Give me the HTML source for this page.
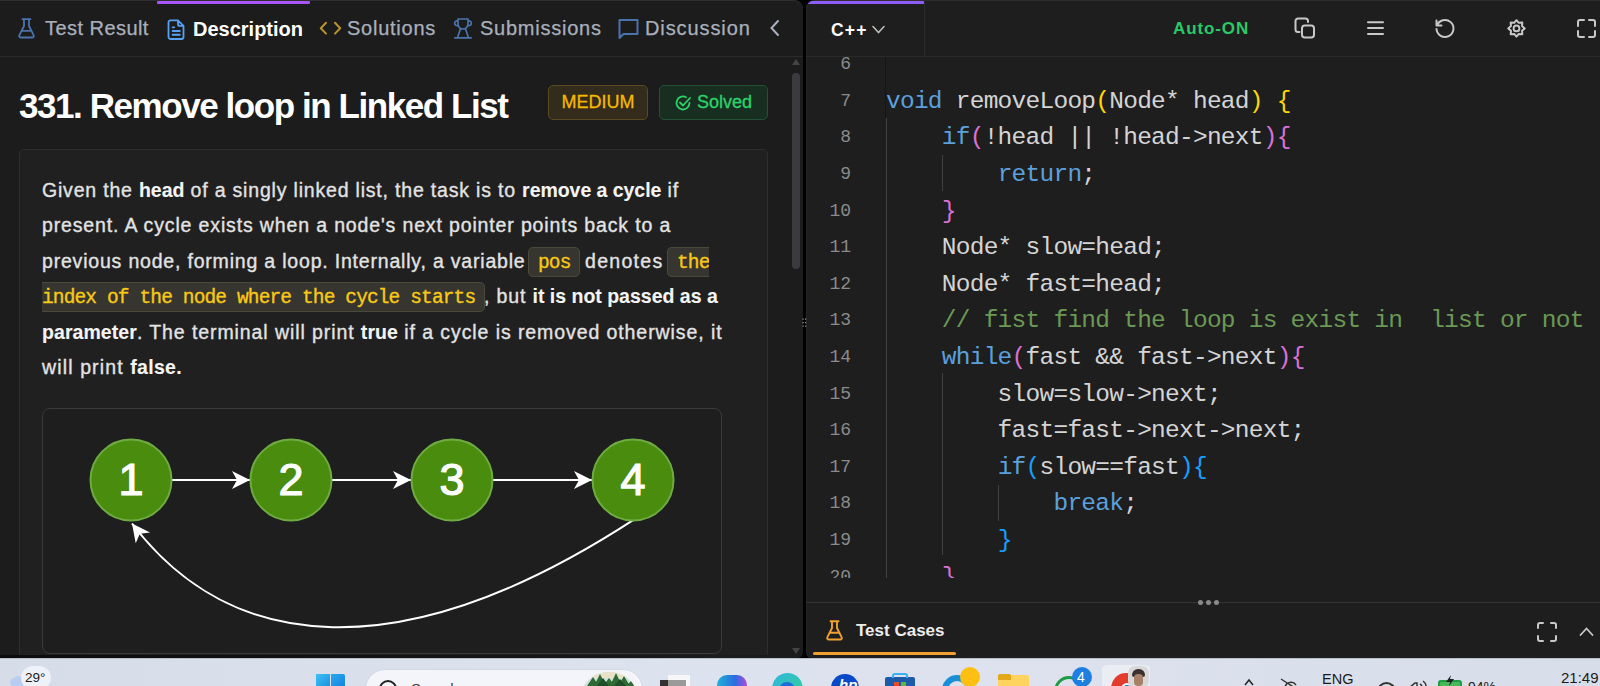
<!DOCTYPE html>
<html><head><meta charset="utf-8">
<style>
*{margin:0;padding:0;box-sizing:border-box}
html,body{width:1600px;height:686px;overflow:hidden;background:#000;font-family:"Liberation Sans",sans-serif}
.abs{position:absolute}
#left{position:absolute;left:0;top:0;width:803px;height:658px;background:#1c1c1c;border-radius:0 9px 6px 0;overflow:hidden;box-shadow:inset 0 1px 0 #2e2e2e}
#right{position:absolute;left:806px;top:0;width:794px;height:658px;background:#1e1e1e;border-radius:9px 0 0 6px;overflow:hidden;box-shadow:inset 0 1px 0 #2e2e2e,inset 1px 0 0 #262626}
.tab{position:absolute;top:16px;font-size:20px;color:#a9b0bc;white-space:nowrap;line-height:24px;-webkit-text-stroke:0.25px #a9b0bc}
.hdrline{position:absolute;left:0;top:56px;height:1px;background:#2a2a2a}
#taskbar{position:absolute;left:0;top:658px;width:1600px;height:28px;background:linear-gradient(90deg,#d6dce8,#dde2ef 40%,#dde2ee 60%,#d8dee9);overflow:hidden}
.mono{font-family:"Liberation Mono",monospace}
.desc{position:absolute;left:42px;font-size:19.5px;color:#e3e3e3;white-space:nowrap;line-height:24px}
.desc{letter-spacing:var(--ls);-webkit-text-stroke:0.35px #e3e3e3}
.desc b{color:#f4f4f4;-webkit-text-stroke:0.1px #f4f4f4;letter-spacing:calc(var(--ls) - 0.85px)}
.ic{position:absolute;background:#363530;border:1px solid #4b4939;border-radius:5px}
.code{position:absolute;margin-top:1px;left:80px;font-family:"Liberation Mono",monospace;font-size:24.5px;letter-spacing:-0.75px;color:#d4d4d4;white-space:pre;line-height:36.6px}
.ln{position:absolute;width:45px;left:0;text-align:right;font-family:"Liberation Mono",monospace;font-size:18px;color:#8b8b8b;line-height:36.6px}
.kw{color:#5ba0dc}.p1{color:#ffd700}.p2{color:#da70d6}.p3{color:#179fff}.cm{color:#6a9955}
.icode{position:absolute;-webkit-text-stroke:0.35px #f8c916;font-family:"Liberation Mono",monospace;font-size:19.5px;letter-spacing:-0.87px;margin-top:2px;color:#f8c916;white-space:pre;line-height:24px}
.guide{position:absolute;width:1px;background:#404040}
</style></head><body>
<div id="left">
  <div class="abs" style="left:157px;top:1px;width:153px;height:3px;background:#a855f7;border-radius:1px"></div>
  <!-- flask icon -->
  <svg class="abs" style="left:17.5px;top:17.5px" width="18" height="21" viewBox="0 0 18 21"><path d="M4.5 1.2h8M6 1.2v6.8L1.4 17.1c-.6 1.1.1 2.4 1.4 2.4h11.4c1.3 0 2-1.3 1.4-2.4L11 8V1.2M3.5 12.8h10" fill="none" stroke="#4a73ab" stroke-width="1.8" stroke-linejoin="round" stroke-linecap="round"/></svg>
  <div class="tab" id="t1" style="left:45px;letter-spacing:0.45px">Test Result</div>
  <svg class="abs" style="left:167px;top:19px" width="18" height="22" viewBox="0 0 18 22"><path d="M3.5 1.4h7.5l5.5 5.5v11.1a2 2 0 0 1-2 2H3.5a2 2 0 0 1-2-2V3.4a2 2 0 0 1 2-2zM11 1.4v3.5a2 2 0 0 0 2 2h3.5" fill="none" stroke="#56a0f5" stroke-width="1.8" stroke-linejoin="round"/><path d="M5.6 8.3h1.6M5.6 12h7.2M5.6 15.75h7.2" stroke="#56a0f5" stroke-width="1.8" stroke-linecap="round"/></svg>
  <div class="tab" style="left:193px;color:#fff;font-weight:bold;top:17px;-webkit-text-stroke:0">Description</div>
  <svg class="abs" style="left:319px;top:21px" width="23" height="15" viewBox="0 0 23 15"><path d="M7 1.8L1.8 7.2 7 12.6M16 1.8l5.2 5.4L16 12.6" fill="none" stroke="#b8942a" stroke-width="2" stroke-linecap="round" stroke-linejoin="round"/></svg>
  <div class="tab" id="t3" style="left:347px;letter-spacing:0.75px">Solutions</div>
  <svg class="abs" style="left:452px;top:17px" width="22" height="22" viewBox="0 0 22 22"><path d="M6 2h10v5a5 5 0 0 1-10 0zM6 4C1.6 3 1.6 9.5 6 8.5M16 4c4.4-1 4.4 5.5 0 4.5M8.5 11.8L5.5 20.8M13.5 11.8l3 9M2.8 20.8h16.4" fill="none" stroke="#4a73ab" stroke-width="1.7" stroke-linejoin="round" stroke-linecap="round"/></svg>
  <div class="tab" id="t4" style="left:480px;letter-spacing:0.75px">Submissions</div>
  <svg class="abs" style="left:617px;top:18px" width="23" height="22" viewBox="0 0 23 22"><path d="M2.5 2h18v14h-14l-4 4z" fill="none" stroke="#4a73ab" stroke-width="2" stroke-linejoin="round"/></svg>
  <div class="tab" id="t5" style="left:645px;letter-spacing:0.9px">Discussion</div>
  <svg class="abs" style="left:769px;top:19px" width="12" height="18" viewBox="0 0 12 18"><path d="M9 2L2.5 9 9 16" fill="none" stroke="#a9b0bc" stroke-width="2" stroke-linecap="round"/></svg>
  <div class="hdrline" style="width:803px"></div>

  <!-- title -->
  <div class="abs" style="left:19px;top:86px;font-size:35px;font-weight:bold;color:#fff;white-space:nowrap;line-height:40px;letter-spacing:-1.43px">331. Remove loop in Linked List</div>
  <div class="abs" style="left:548px;top:85px;width:100px;height:35px;background:#332b1b;border:1px solid #5a4a1e;border-radius:5px;color:#f5b800;font-size:18px;line-height:33px;text-align:center;-webkit-text-stroke:0.3px #f5b800">MEDIUM</div>
  <div class="abs" style="left:659px;top:85px;width:109px;height:35px;background:#182e20;border:1px solid #225236;border-radius:5px;color:#2bd46a;font-size:18px;line-height:33px;-webkit-text-stroke:0.3px #2bd46a">
    <svg class="abs" style="left:14px;top:8px" width="18" height="18" viewBox="0 0 18 18"><path d="M15.5 9A6.5 6.5 0 1 1 12 3.2M6 8.5l3 3 7-7.5" fill="none" stroke="#2bd46a" stroke-width="1.8" stroke-linecap="round" stroke-linejoin="round"/></svg>
    <span class="abs" style="left:37px;top:0">Solved</span>
  </div>

  <!-- scrollbar -->
  <div class="abs" style="left:792px;top:73px;width:8px;height:196px;background:#3b3b3f;border-radius:4px"></div>
  <div class="abs" style="left:792px;top:59px;width:0;height:0;border-left:4px solid transparent;border-right:4px solid transparent;border-bottom:6px solid #444"></div>
  <div class="abs" style="left:792px;top:648px;width:0;height:0;border-left:4px solid transparent;border-right:4px solid transparent;border-top:6px solid #444"></div>

  <!-- description box -->
  <div class="abs" style="left:19px;top:149px;width:749px;height:560px;background:#202020;border:1px solid #2e2e2e;border-radius:5px"></div>

  <div class="desc" id="d1" style="--ls:0.809px;top:178px">Given the <b>head</b> of a singly linked list, the task is to <b>remove a cycle</b> if</div>
  <div class="desc" id="d2" style="--ls:0.858px;top:213px">present. A cycle exists when a node's next pointer points back to a</div>
  <div class="desc" id="d3a" style="--ls:0.806px;top:249px">previous node, forming a loop. Internally, a variable</div>
  <div class="ic" style="left:528px;top:247px;width:52px;height:30px"></div>
  <div class="icode" style="left:538px;top:249px">pos</div>
  <div class="desc" id="d3b" style="--ls:1.3px;left:585px;top:249px">denotes</div>
  <div class="ic" style="left:667px;top:247px;width:50px;height:30px;border-right:0;border-radius:5px 0 0 5px"></div>
  <div class="icode" style="left:677px;top:249px">the</div>
  <div class="abs" style="left:709px;top:240px;width:40px;height:40px;background:#202020"></div>
  <div class="ic" style="left:42px;top:282px;width:443px;height:30px;border-left:0;border-radius:0 5px 5px 0"></div>
  <div class="icode" style="left:42px;top:284px">index of the node where the cycle starts</div>
  <div class="desc" id="d4" style="--ls:0.85px;left:484px;top:284px">, but <b>it is not passed as a</b></div>
  <div class="desc" id="d5" style="--ls:0.916px;top:320px"><b>parameter</b>. The terminal will print <b>true</b> if a cycle is removed otherwise, it</div>
  <div class="desc" id="d6" style="--ls:1.130px;top:355px">will print <b>false.</b></div>

  <div class="abs" style="left:0;top:655px;width:803px;height:3px;background:linear-gradient(90deg,#0c0c0c,#111 300px,#161616 600px,#1c1c1c 720px)"></div>
  <!-- image box -->
  <div class="abs" style="left:42px;top:408px;width:680px;height:246px;background:#1e1e1e;border:1px solid #3a3a3a;border-radius:8px"></div>
  <svg class="abs" style="left:0;top:0" width="803" height="658">
    <defs>
      <marker id="ah" markerWidth="20" markerHeight="20" refX="18" refY="9" orient="auto" markerUnits="userSpaceOnUse">
        <path d="M0 0L18 9L0 18L5 9z" fill="#fff"/>
      </marker>
    </defs>
    <g stroke="#fff" stroke-width="2" fill="none">
      <line x1="172" y1="480" x2="250" y2="480" marker-end="url(#ah)"/>
      <line x1="332" y1="480" x2="411" y2="480" marker-end="url(#ah)"/>
      <line x1="493" y1="480" x2="592" y2="480" marker-end="url(#ah)"/>
      <path d="M633.5 519.9C401.3 670.9 230.8 653.8 132 523.5" marker-end="url(#ah)"/>
    </g>
    <g fill="#4a8c0e" stroke="#6eab42" stroke-width="2">
      <circle cx="131" cy="480" r="40.5"/>
      <circle cx="291" cy="480" r="40.5"/>
      <circle cx="452" cy="480" r="40.5"/>
      <circle cx="633" cy="480" r="40.5"/>
    </g>
    <g fill="#fff" stroke="#fff" stroke-width="1.2" style="font-family:'Liberation Sans',sans-serif;font-size:45px" text-anchor="middle">
      <text x="131" y="495">1</text><text x="291" y="495">2</text><text x="452" y="495">3</text><text x="633" y="495">4</text>
    </g>
  </svg>
</div>

<div id="right">
  <div class="abs" style="left:2px;top:1px;width:116px;height:3px;background:#8b5cf6;border-radius:2px 1px 0 0"></div>
  <div class="abs" style="left:118px;top:0;width:1px;height:56px;background:#2a2a2a"></div>
  <div class="abs" style="left:25px;top:18px;font-size:17.5px;font-weight:bold;color:#fff;line-height:24px;letter-spacing:1.2px">C++</div>
  <svg class="abs" style="left:66px;top:25px" width="13" height="9" viewBox="0 0 13 9"><path d="M1 1.5l5.5 6 5.5-6" fill="none" stroke="#bbb" stroke-width="1.6" stroke-linecap="round"/></svg>
  <div class="abs" style="left:367px;top:17px;font-size:17px;font-weight:bold;color:#2ac866;line-height:24px;letter-spacing:0.9px">Auto-ON</div>
  <svg class="abs" style="left:488px;top:17px" width="23" height="23" viewBox="0 0 23 23"><path d="M5.5 15H4a2.5 2.5 0 0 1-2.5-2.5V4A2.5 2.5 0 0 1 4 1.5h7.5A2.5 2.5 0 0 1 14 4v1" fill="none" stroke="#c8c8c8" stroke-width="2" stroke-linecap="round"/><rect x="8" y="8.6" width="12" height="12" rx="2.8" fill="none" stroke="#c8c8c8" stroke-width="2"/></svg>
  <svg class="abs" style="left:560px;top:19px" width="20" height="19" viewBox="0 0 20 19"><path d="M2 3.2h15M2 9.1h15M2 15h15" fill="none" stroke="#c8c8c8" stroke-width="2" stroke-linecap="round"/></svg>
  <svg class="abs" style="left:627px;top:16px" width="25" height="25" viewBox="0 0 25 25"><path d="M4 9.5A8.5 8.5 0 1 1 3.5 13M3.5 4.5v5h5" fill="none" stroke="#c8c8c8" stroke-width="2" stroke-linecap="round" stroke-linejoin="round"/></svg>
  <svg class="abs" style="left:701px;top:19px" width="19" height="19" viewBox="0 0 19 19"><path d="M9.50 1.20 L11.80 3.86 L15.30 3.60 L15.04 7.10 L17.70 9.40 L15.04 11.70 L15.30 15.20 L11.80 14.94 L9.50 17.60 L7.20 14.94 L3.70 15.20 L3.96 11.70 L1.30 9.40 L3.96 7.10 L3.70 3.60 L7.20 3.86Z" fill="none" stroke="#c8c8c8" stroke-width="2" stroke-linejoin="round"/><circle cx="9.5" cy="9.4" r="2.9" fill="none" stroke="#c8c8c8" stroke-width="1.9"/></svg>
  <svg class="abs" style="left:771px;top:18.5px" width="20" height="20" viewBox="0 0 20 20"><path d="M1 7V3a2 2 0 0 1 2-2h4M12 1h4a2 2 0 0 1 2 2v4M18 12v4a2 2 0 0 1-2 2h-4M7 18H3a2 2 0 0 1-2-2v-4" fill="none" stroke="#c8c8c8" stroke-width="2" stroke-linecap="round"/></svg>
  <div class="abs" style="left:0;top:56px;width:794px;height:1px;background:#2a2a2a"></div>

  <div class="abs" style="left:0;top:57px;width:794px;height:521px;overflow:hidden">
    <div class="abs" style="left:79px;top:0;width:1px;height:61px;background:#141414"></div>
    <div class="guide" style="left:80px;top:61px;height:460px"></div>
    <div class="guide" style="left:136px;top:98px;height:36px"></div>
    <div class="guide" style="left:136px;top:316px;height:182px"></div>
    <div class="guide" style="left:192px;top:428px;height:36px"></div>
    <div id="lns" class="abs" style="left:0;top:0">
      <div class="ln" style="top:-10.8px">6</div>
      <div class="ln" style="top:25.8px">7</div>
      <div class="ln" style="top:62.4px">8</div>
      <div class="ln" style="top:99px">9</div>
      <div class="ln" style="top:135.6px">10</div>
      <div class="ln" style="top:172.2px">11</div>
      <div class="ln" style="top:208.8px">12</div>
      <div class="ln" style="top:245.4px">13</div>
      <div class="ln" style="top:282px">14</div>
      <div class="ln" style="top:318.6px">15</div>
      <div class="ln" style="top:355.2px">16</div>
      <div class="ln" style="top:391.8px">17</div>
      <div class="ln" style="top:428.4px">18</div>
      <div class="ln" style="top:465px">19</div>
      <div class="ln" style="top:501.6px">20</div>
    </div>
    <div class="code" id="c7" style="top:25.8px"><span class="kw">void</span> removeLoop<span class="p1">(</span>Node* head<span class="p1">)</span> <span class="p1">{</span></div>
    <div class="code" style="top:62.4px">    <span class="kw">if</span><span class="p2">(</span>!head || !head-&gt;next<span class="p2">){</span></div>
    <div class="code" style="top:99px">        <span class="kw">return</span>;</div>
    <div class="code" style="top:135.6px">    <span class="p2">}</span></div>
    <div class="code" style="top:172.2px">    Node* slow=head;</div>
    <div class="code" style="top:208.8px">    Node* fast=head;</div>
    <div class="code cm" id="c13" style="top:245.4px">    // fist find the loop is exist in  list or not</div>
    <div class="code" style="top:282px">    <span class="kw">while</span><span class="p2">(</span>fast &amp;&amp; fast-&gt;next<span class="p2">){</span></div>
    <div class="code" style="top:318.6px">        slow=slow-&gt;next;</div>
    <div class="code" style="top:355.2px">        fast=fast-&gt;next-&gt;next;</div>
    <div class="code" style="top:391.8px">        <span class="kw">if</span><span class="p3">(</span>slow==fast<span class="p3">){</span></div>
    <div class="code" style="top:428.4px">            <span class="kw">break</span>;</div>
    <div class="code" style="top:465px">        <span class="p3">}</span></div>
    <div class="code" style="top:501.6px">    <span class="p2">}</span></div>
  </div>

  <div class="abs" style="left:0;top:602px;width:794px;height:1px;background:#333"></div>
  <div class="abs" style="left:392px;top:600px;width:5px;height:5px;border-radius:50%;background:#8a8a8a"></div>
  <div class="abs" style="left:400px;top:600px;width:5px;height:5px;border-radius:50%;background:#8a8a8a"></div>
  <div class="abs" style="left:408px;top:600px;width:5px;height:5px;border-radius:50%;background:#8a8a8a"></div>
  <svg class="abs" style="left:19.5px;top:619.5px" width="18" height="21" viewBox="0 0 18 21"><path d="M4.5 1.2h8M6 1.2v6.8L1.4 17.1c-.6 1.1.1 2.4 1.4 2.4h11.4c1.3 0 2-1.3 1.4-2.4L11 8V1.2M3.5 12.8h10" fill="none" stroke="#f0a030" stroke-width="1.9" stroke-linejoin="round" stroke-linecap="round"/></svg>
  <div class="abs" style="left:50px;top:619px;font-size:17px;font-weight:bold;color:#ececec;line-height:24px">Test Cases</div>
  <div class="abs" style="left:7px;top:652px;width:143px;height:3px;background:#f0a030;border-radius:2px"></div>
  <svg class="abs" style="left:731px;top:622px" width="20" height="20" viewBox="0 0 20 20"><path d="M1 6V3a2 2 0 0 1 2-2h3M14 1h3a2 2 0 0 1 2 2v3M19 14v3a2 2 0 0 1-2 2h-3M6 19H3a2 2 0 0 1-2-2v-3" fill="none" stroke="#c8c8c8" stroke-width="2" stroke-linecap="round"/></svg>
  <svg class="abs" style="left:773px;top:626px" width="15" height="11" viewBox="0 0 15 11"><path d="M1.5 9l6-6.5 6 6.5" fill="none" stroke="#c8c8c8" stroke-width="1.8" stroke-linecap="round"/></svg>
</div>

<svg class="abs" style="left:802px;top:318px" width="5" height="10" viewBox="0 0 5 10"><g fill="#9a9a9a"><rect x="0.5" y="0.5" width="1.2" height="1.2"/><rect x="3" y="0.5" width="1.2" height="1.2"/><rect x="0.5" y="4" width="1.2" height="1.2"/><rect x="3" y="4" width="1.2" height="1.2"/><rect x="0.5" y="7.5" width="1.2" height="1.2"/><rect x="3" y="7.5" width="1.2" height="1.2"/></g></svg>
<div id="taskbar">
  <div class="abs" style="left:0;top:0;width:1600px;height:1px;background:#b9bec9"></div>
  <svg class="abs" style="left:9px;top:671px;top:13px" width="16" height="15" viewBox="0 0 16 15"><path d="M4 15a4 4 0 0 1 1-7.8A5 5 0 0 1 14 9v6z" fill="#b9cdf0"/></svg>
  <div class="abs" style="left:21px;top:8px;width:30px;height:24px;border-radius:12px;background:#eef1f7"></div>
  <div class="abs" style="left:25px;top:12px;font-size:13.5px;color:#1b1b1b;line-height:16px">29°</div>
  <div class="abs" style="left:316px;top:16px;width:14px;height:14px;background:linear-gradient(135deg,#3fc1f5,#1b8fe0)"></div>
  <div class="abs" style="left:331px;top:16px;width:14px;height:14px;background:linear-gradient(135deg,#2aa8f0,#1482dd);border-top-right-radius:2px"></div>
  <div class="abs" style="left:365px;top:11px;width:278px;height:40px;border-radius:20px;background:#f3f5fa;border:1px solid #d3d8e3"></div>
  <div class="abs" style="left:379px;top:22px;width:18px;height:18px;border-radius:50%;border:2.5px solid #222"></div>
  <div class="abs" style="left:411px;top:21px;font-size:15px;color:#444;line-height:20px">Search</div>
  <svg class="abs" style="left:581px;top:14px" width="56" height="14" viewBox="0 0 56 14"><defs><clipPath id="tc"><ellipse cx="28" cy="22" rx="27" ry="22"/></clipPath></defs><g clip-path="url(#tc)"><rect width="56" height="14" fill="#cfe2dc"/><rect y="0" width="56" height="6" fill="#e8e2c8"/><path d="M6 14L12 5 18 14zM13 14L19 2 25 14zM22 14L28 6 34 14zM29 14L35 1 41 14zM37 14L43 4 49 14zM45 14L51 8 57 14z" fill="#2e6b35"/><path d="M16 14L22 6 28 14zM33 14L39 7 45 14z" fill="#1f4f28"/></g></svg>
  <div class="abs" style="left:668px;top:17px;width:22px;height:14px;background:#f7f7f7"></div>
  <div class="abs" style="left:660px;top:22px;width:8px;height:8px;background:#333"></div>
  <div class="abs" style="left:668px;top:22px;width:18px;height:8px;background:#9a9a9a"></div>
  <div class="abs" style="left:717px;top:17px;width:30px;height:22px;border-radius:10px 10px 0 0;background:linear-gradient(90deg,#22b0d8,#2a6de0 60%,#b14ad8)"></div>
  <div class="abs" style="left:772px;top:15px;width:31px;height:31px;border-radius:50%;background:linear-gradient(135deg,#2fb5e0,#34d48a)"></div>
  <div class="abs" style="left:779px;top:24px;width:16px;height:16px;border-radius:50%;background:#1d6ed8"></div>
  <div class="abs" style="left:831px;top:16px;width:28px;height:28px;border-radius:50%;background:#0a4ac8"></div>
  <div class="abs" style="left:839px;top:19px;font-size:15px;font-style:italic;font-weight:bold;color:#fff;line-height:16px">hp</div>
  <div class="abs" style="left:885px;top:19px;width:30px;height:12px;background:#1d5aa8;border-radius:2px"></div>
  <div class="abs" style="left:892px;top:15px;width:16px;height:5px;border:2px solid #3ab0f0;border-bottom:0;border-radius:3px 3px 0 0"></div>
  <div class="abs" style="left:894px;top:24px;width:5px;height:4px;background:#e84d2a"></div>
  <div class="abs" style="left:901px;top:24px;width:5px;height:4px;background:#5cb838"></div>
  <div class="abs" style="left:942px;top:17px;width:30px;height:30px;border-radius:50%;background:#1a8fd8"></div>
  <div class="abs" style="left:948px;top:23px;width:18px;height:18px;border-radius:50%;background:#dce2ed"></div>
  <div class="abs" style="left:960px;top:9px;width:20px;height:20px;border-radius:50%;background:#fdc012"></div>
  <div class="abs" style="left:998px;top:17px;width:31px;height:12px;background:#ffd45e;border-radius:2px"></div>
  <div class="abs" style="left:998px;top:16px;width:13px;height:6px;background:#e2a818;border-radius:2px 2px 0 0"></div>
  <div class="abs" style="left:1054px;top:18px;width:30px;height:30px;border-radius:50%;border:3px solid #1e9b45"></div>
  <div class="abs" style="left:1072px;top:9px;width:20px;height:20px;border-radius:50%;background:#1f7fe0"></div>
  <div class="abs" style="left:1077px;top:11px;font-size:14px;color:#fff;line-height:16px">4</div>
  <div class="abs" style="left:1102px;top:7px;width:48px;height:30px;border-radius:5px;background:#eaedf4"></div>
  <div class="abs" style="left:1111px;top:15px;width:30px;height:30px;border-radius:50%;background:conic-gradient(from -90deg,#e33b2e 0 120deg,#f5c41a 120deg 240deg,#2aa44a 240deg 360deg)"></div>
  <div class="abs" style="left:1121px;top:25px;width:12px;height:12px;border-radius:50%;background:#2a72e0;border:2px solid #fff"></div>
  <div class="abs" style="left:1128px;top:8px;width:21px;height:22px;border-radius:7px;background:#d8d8d8;overflow:hidden"><div class="abs" style="left:4px;top:3px;width:13px;height:8px;border-radius:6px 6px 2px 2px;background:#3a3030"></div><div class="abs" style="left:6px;top:8px;width:9px;height:12px;border-radius:4px;background:#a88068"></div></div>
  <svg class="abs" style="left:1244px;top:20px" width="10" height="8" viewBox="0 0 10 8"><path d="M1 7l4-5 4 5" fill="none" stroke="#222" stroke-width="1.5"/></svg>
  <svg class="abs" style="left:1280px;top:20px" width="20" height="10" viewBox="0 0 20 10"><path d="M1 1l14 9M5 10a6 6 0 0 1 11-3" fill="none" stroke="#333" stroke-width="1.4"/></svg>
  <div class="abs" style="left:1322px;top:13px;font-size:14.5px;color:#1b1b1b;line-height:16px">ENG</div>
  <div class="abs" style="left:1377px;top:24px;width:19px;height:14px;border-radius:10px 10px 0 0;border:2px solid #333;border-bottom:0"></div>
  <svg class="abs" style="left:1407px;top:20px" width="22" height="10" viewBox="0 0 22 10"><path d="M2 10l6-5h2V10M13 6a4 4 0 0 1 2 4M16 3a7 7 0 0 1 3 7" fill="none" stroke="#333" stroke-width="1.5"/></svg>
  <div class="abs" style="left:1438px;top:22px;width:24px;height:10px;border-radius:3px;border:2px solid #1e9b45;background:#48b85a"></div>
  <svg class="abs" style="left:1445px;top:17px" width="10" height="11" viewBox="0 0 10 11"><path d="M6 0L1 7h4l-1 4 5-7H5z" fill="#222"/></svg>
  <div class="abs" style="left:1468px;top:21px;font-size:14px;color:#1b1b1b;line-height:16px">94%</div>
  <div class="abs" style="left:1561px;top:12px;font-size:15px;color:#1b1b1b;line-height:16px">21:49</div>
</div>
</body></html>
